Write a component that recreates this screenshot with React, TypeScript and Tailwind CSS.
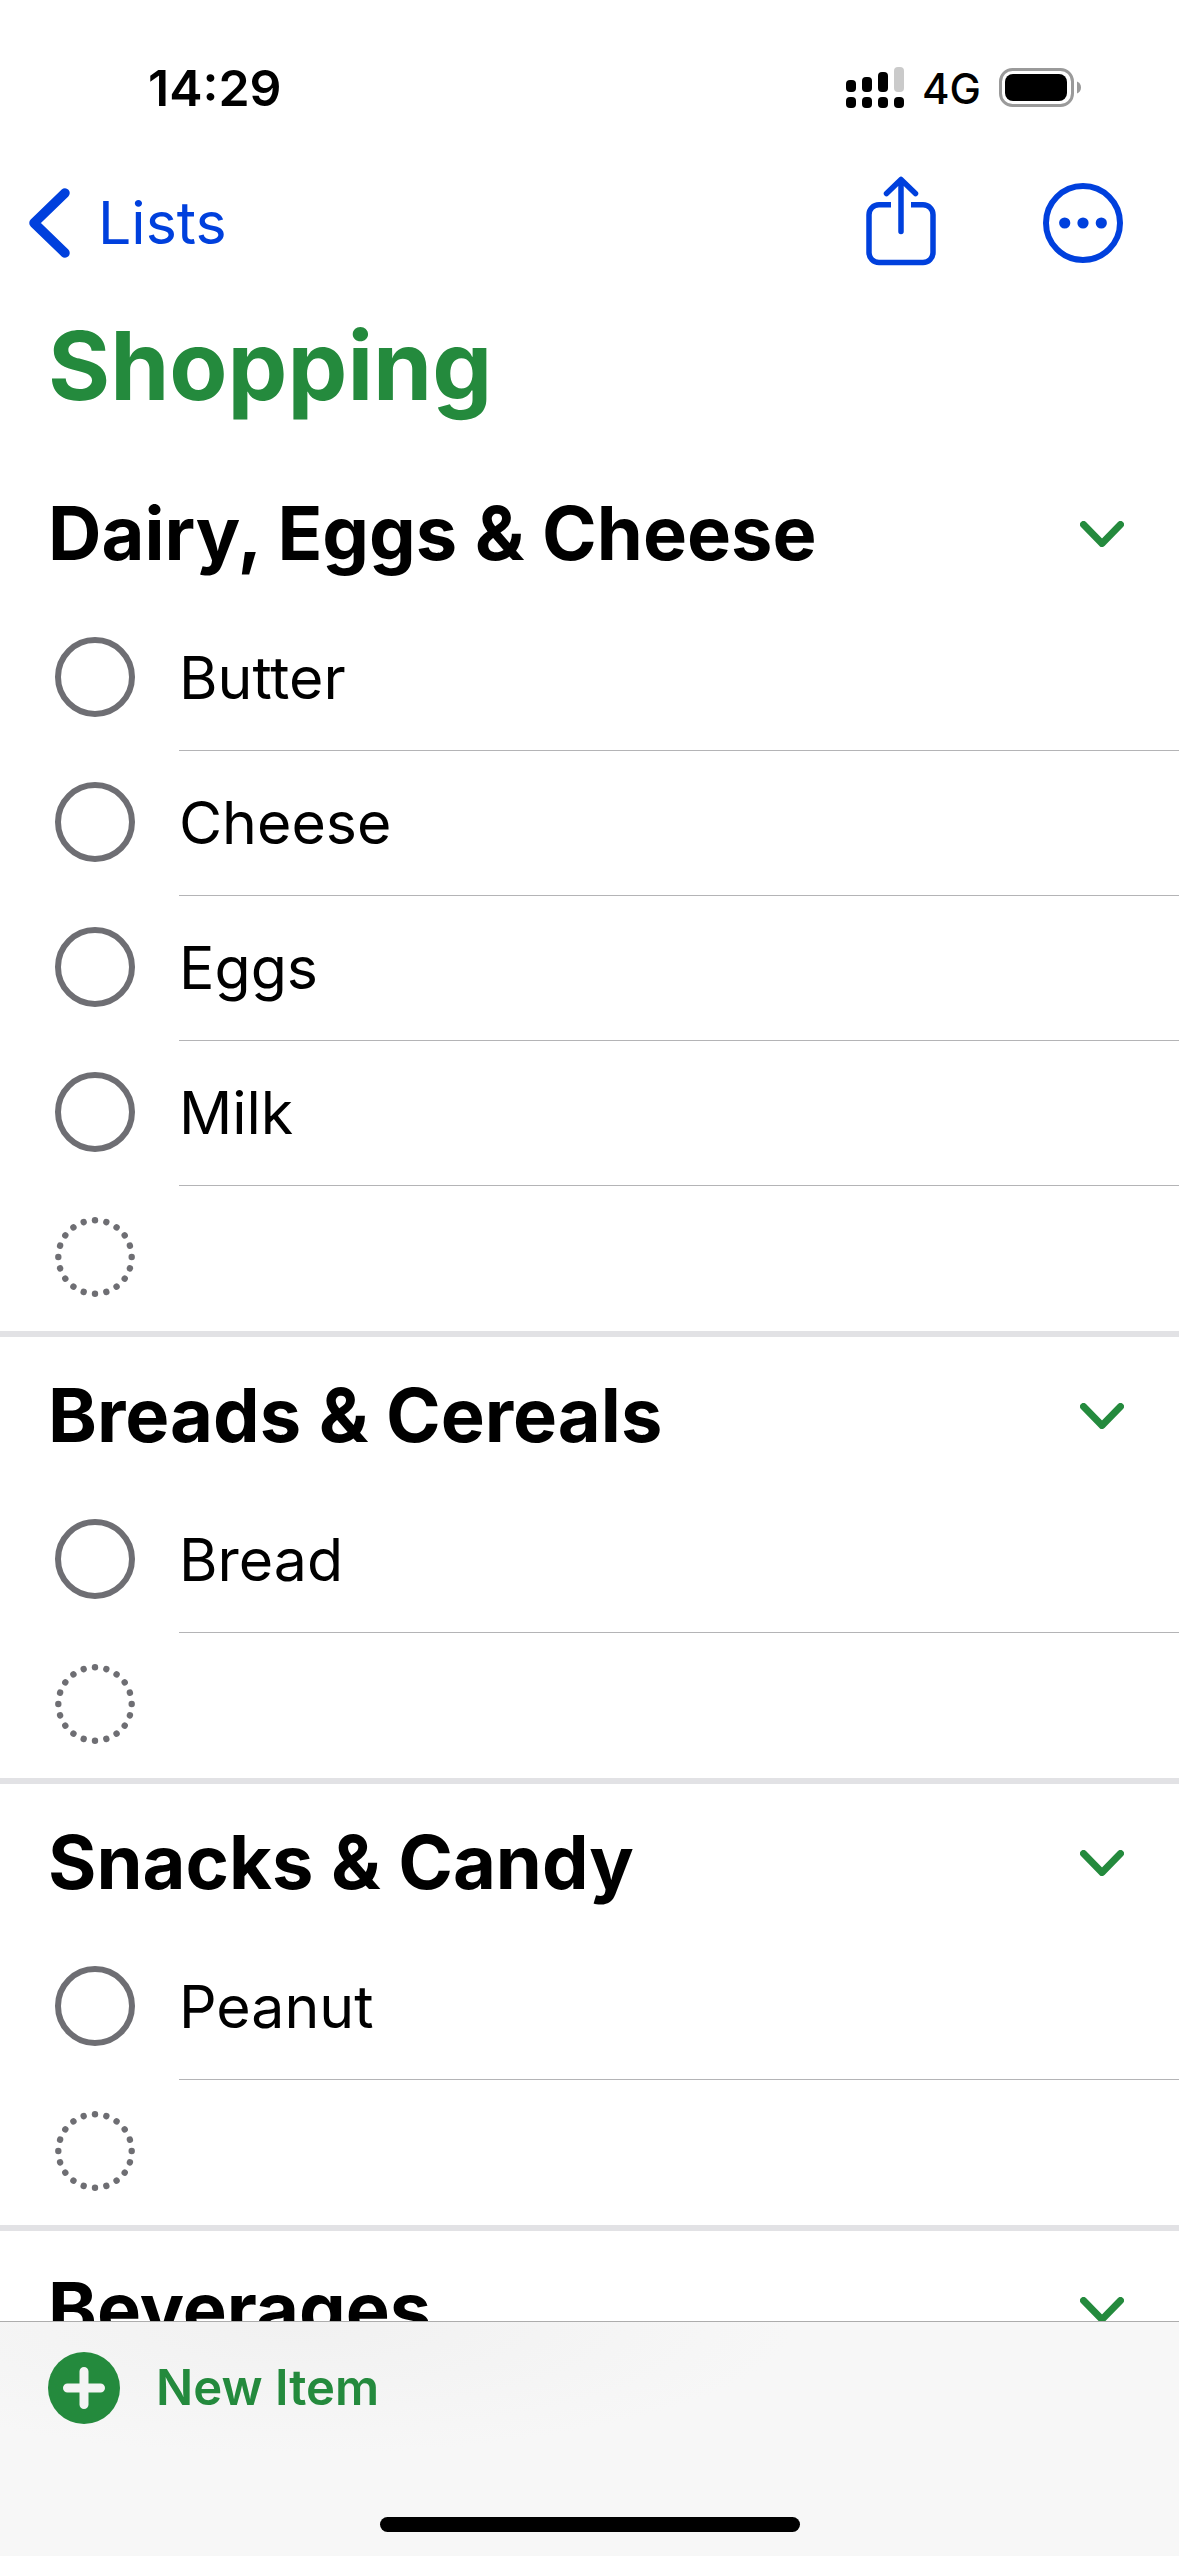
import { useState } from "react";

// shopping list sections
const sections = [
    { title: "Dairy, Eggs & Cheese", items: ["Butter", "Cheese", "Eggs", "Milk"] },
    { title: "Breads & Cereals", items: ["Bread"] },
    { title: "Snacks & Candy", items: ["Peanut"] },
    { title: "Beverages", items: [] },
];

// Clock, signal, network and battery
const StatusBar = () => (
    <div className="flex h-44 items-center justify-between pl-[148px] pr-[98px]">
        <time className="text-[50px] font-semibold">14:29</time>
        <div className="flex items-center">
            <svg className="h-[42px] w-[58px]" viewBox="0 0 58 42" aria-hidden="true">
                <rect x="0" y="13" width="10" height="12" rx="4" />
                <rect x="16" y="10" width="10" height="15" rx="4" />
                <rect x="32" y="5" width="10" height="20" rx="4" />
                <rect x="48" y="0" width="10" height="25" rx="4" fill="#cacaca" />
                <rect x="0" y="30" width="10" height="11" rx="4" />
                <rect x="16" y="30" width="10" height="11" rx="4" />
                <rect x="32" y="30" width="10" height="11" rx="4" />
                <rect x="48" y="30" width="10" height="11" rx="4" />
            </svg>
            <span className="ml-[18px] text-[42px] font-medium">4G</span>
            <svg className="ml-[18px] h-10 w-[82px]" viewBox="0 0 82 40" aria-hidden="true">
                <rect x="1.5" y="1.5" width="72" height="36" rx="12" fill="none" stroke="#9a9a9a" strokeWidth="3" />
                <rect x="6" y="6" width="62" height="27" rx="8" />
                <path d="M78 13.5c2.600 1 4 3.300 4 6s-1.400 5-4 6z" fill="#9a9a9a" />
            </svg>
        </div>
    </div>
);

const NavBar = () => (
    <nav className="flex items-center justify-between pl-7 pr-14 text-[#0040dd]">
        <a href="#lists" className="flex items-center gap-7 text-[59px] leading-[90px]">
            <svg className="h-[70px] w-[42px]" viewBox="0 0 42 70" fill="none" stroke="currentColor" strokeWidth="9.500" strokeLinecap="round" strokeLinejoin="round" aria-hidden="true">
                <path d="M37 5 6 35l31 30" />
            </svg>
            Lists
        </a>
        <div className="flex items-center gap-[107px]">
            <button type="button" aria-label="Share">
                <svg className="h-[94px] w-[70px]" viewBox="0 2 70 94" fill="none" stroke="currentColor" strokeWidth="5.500" aria-hidden="true">
                    <path d="M25 30.700H13a10 10 0 0 0-10 10V78.500a10 10 0 0 0 10 10H57a10 10 0 0 0 10-10V40.700a10 10 0 0 0-10-10H45" />
                    <path d="M35 57.500V6.500M20.500 19.500 35 5.500l14.500 14" strokeLinecap="round" strokeLinejoin="round" />
                </svg>
            </button>
            <button type="button" aria-label="More">
                <svg className="size-20" viewBox="0 0 80 80" aria-hidden="true">
                    <circle cx="40" cy="40" r="37" fill="none" stroke="currentColor" strokeWidth="6" />
                    <g fill="currentColor">
                        <circle cx="21.700" cy="40" r="5.600" />
                        <circle cx="40" cy="40" r="5.600" />
                        <circle cx="58.300" cy="40" r="5.600" />
                    </g>
                </svg>
            </button>
        </div>
    </nav>
);

// ring of 20 dots for the empty row
const DottedCircle = () => (
    <svg className="size-20" viewBox="-40 -40 80 80" fill="#6e6e73" aria-hidden="true">
        {Array.from({ length: 20 }, (_, i) => (
            <circle key={i} cx="0" cy="-36.700" r="3.200" transform={`rotate(${i * 18})`} />
        ))}
    </svg>
);

const Section = ({ title, items }: { title: string; items: string[] }) => {
    const [open, setOpen] = useState(true);

    return (
        <section className="border-b-6 border-[#e2e2e5]">
            <h2>
                <button
                    type="button"
                    aria-expanded={open}
                    onClick={() => setOpen(!open)}
                    className="flex h-[151px] w-full items-center justify-between pl-12 pr-[55px] pt-1.5 text-left text-[74px] font-bold"
                >
                    {title}
                    <svg className={`h-[26px] w-11 ${open ? "rotate-0" : "-rotate-90"}`} viewBox="0 0 44 26" fill="none" stroke="#248a3d" strokeWidth="7" strokeLinecap="round" strokeLinejoin="round" aria-hidden="true">
                        <path d="M3.500 3.500 22 22.500l18.500-19" />
                    </svg>
                </button>
            </h2>
            {open && (
                <ul>
                    {items.map((item) => (
                        <li key={item}>
                            <label className="flex h-[145px] items-center pl-[55px]">
                                <input
                                    type="checkbox"
                                    className="mb-[3px] size-20 shrink-0 appearance-none rounded-full border-6 border-[#6e6e73] checked:border-[#248a3d] checked:bg-[#248a3d]"
                                />
                                <span className="ml-11 flex h-full flex-1 items-center border-b border-[#b4b4b6] text-[59px]">
                                    {item}
                                </span>
                            </label>
                        </li>
                    ))}
                    <li className="flex h-[145px] items-center pb-[3px] pl-[55px]">
                        <button type="button" aria-label={`Add to ${title}`}>
                            <DottedCircle />
                        </button>
                    </li>
                </ul>
            )}
        </section>
    );
};

const App = () => {
    return (
        <div className="flex h-screen flex-col bg-white font-[Inter,sans-serif] text-black">
            <header>
                <StatusBar />
                <NavBar />
            </header>
            {/* Scrolling list */}
            <main className="min-h-0 flex-1 overflow-y-auto [scrollbar-width:none]">
                <h1 className="px-12 pb-[29px] pt-9 text-[95px] leading-[120px] font-bold text-[#248a3d]">Shopping</h1>
                {sections.map((section) => (
                    <Section key={section.title} title={section.title} items={section.items} />
                ))}
            </main>
            {/* Bottom toolbar */}
            <footer className="flex h-[235px] shrink-0 flex-col items-center justify-between border-t border-[#adadad] bg-[#f6f6f6] bg-radial-[at_25%_0%] from-[#f1f1f1] to-[#f7f7f7] to-40% pb-6 pt-[30px]">
                <button type="button" className="flex items-center gap-9 self-start pl-12 text-[49px] leading-[72px] font-semibold text-[#248a3d]">
                    <svg className="size-[72px]" viewBox="0 0 72 72" aria-hidden="true">
                        <circle cx="36" cy="36" r="36" fill="#248a3d" />
                        <path d="M36 19.500v33M19.500 36h33" stroke="#f4f4f4" strokeWidth="9" strokeLinecap="round" />
                    </svg>
                    New Item
                </button>
                <div className="h-[15px] w-[420px] rounded-full bg-black" />
            </footer>
        </div>
    );
};

export default App;
